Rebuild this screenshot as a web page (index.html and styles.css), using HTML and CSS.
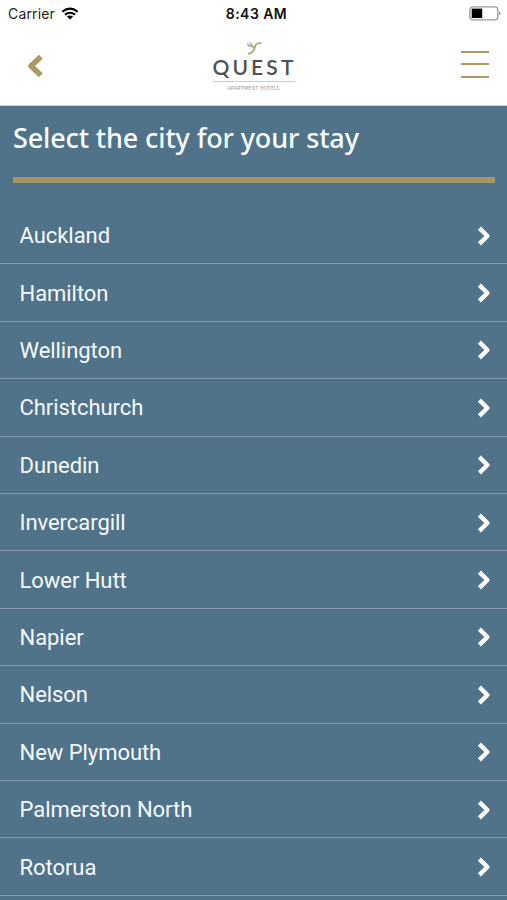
FILE: index.html
```html
<!DOCTYPE html>
<html lang="en">
<head>
<meta charset="utf-8">
<meta name="viewport" content="width=device-width, initial-scale=1">
<title>Quest Apartment Hotels</title>
<link rel="stylesheet" href="styles.css">
</head>
<body>
<svg class="defs" aria-hidden="true"><symbol id="chevron" viewBox="0 0 14 20"><path d="M2.4 2.2 10.4 10 2.4 17.8"/></symbol></svg>
<header class="header">
  <div class="status">
    <div class="carrier"><span>Carrier</span>
      <svg class="wifi" viewBox="0 0 18 13"><path d="M1.3 4.7Q9-1.5 16.7 4.7M4 7.7Q9 3.8 14 7.7"/><path class="wifi-dot" d="M5.9 9.6Q9 7.4 12.1 9.6L9 12.6Z"/></svg>
    </div>
    <time class="time">8:43 AM</time>
    <svg class="battery" viewBox="0 0 32 15"><rect class="battery-case" x=".8" y=".8" width="28" height="13" rx="3"/><rect x="2.7" y="2.6" width="10.5" height="9.4"/><path class="battery-cap" d="M30 5.2Q33 7.3 30 9.4Z"/></svg>
  </div>
  <nav class="nav">
    <button class="back" aria-label="Back"><svg viewBox="0 0 18 26"><path d="M14.8 3.8 5 13 14.8 22.2"/></svg></button>
    <div class="logo">
      <svg class="bird" viewBox="0 0 18 15"><path class="wing" d="M2.2 2.8 6.5 5M4.5 1.2 7.5 4.5M3 5 7 5.5"/><path class="body" d="M16 2.2C12.5 1.2 10.6 3.2 9.8 6.5C9 10 6.5 12 3.5 12.8M7 5.5Q8.5 6.8 9.8 5.8"/></svg>
      <div class="brand">QUEST</div>
      <div class="tagline">APARTMENT HOTELS</div>
    </div>
    <button class="menu" aria-label="Menu"><span></span><span></span><span></span></button>
  </nav>
</header>
<main>
  <h1 class="title">Select the city for your stay</h1>
  <ul class="cities">
    <li><span>Auckland</span><svg><use href="#chevron"/></svg></li>
    <li><span>Hamilton</span><svg><use href="#chevron"/></svg></li>
    <li><span>Wellington</span><svg><use href="#chevron"/></svg></li>
    <li><span>Christchurch</span><svg><use href="#chevron"/></svg></li>
    <li><span>Dunedin</span><svg><use href="#chevron"/></svg></li>
    <li><span>Invercargill</span><svg><use href="#chevron"/></svg></li>
    <li><span>Lower Hutt</span><svg><use href="#chevron"/></svg></li>
    <li><span>Napier</span><svg><use href="#chevron"/></svg></li>
    <li><span>Nelson</span><svg><use href="#chevron"/></svg></li>
    <li><span>New Plymouth</span><svg><use href="#chevron"/></svg></li>
    <li><span>Palmerston North</span><svg><use href="#chevron"/></svg></li>
    <li><span>Rotorua</span><svg><use href="#chevron"/></svg></li>
  </ul>
</main>
</body>
</html>
```
FILE: styles.css
```css
* { box-sizing: border-box; }
html, body { height: 100%; }
body {
  margin: 0;
  overflow: hidden;
  background: #507389;
  font-family: Roboto, "Liberation Sans", sans-serif;
}
.defs { display: none; }
.header { height: 106px; background: #fff; border-bottom: 1px solid #c9d2d9; }
.status {
  height: 27px;
  display: grid;
  grid-template-columns: 1fr auto 1fr;
  align-items: center;
  padding: 0 6px 0 8px;
  color: #222;
  font-family: Inter, sans-serif;
  font-size: 14px;
}
.carrier { display: flex; align-items: center; gap: 6px; letter-spacing: .15px; }
.wifi { width: 18px; height: 13px; }
.wifi path { fill: none; stroke: #000; stroke-width: 2.1; }
.wifi .wifi-dot { fill: #000; stroke: none; }
.time { padding-left: 4px; color: #111; font-weight: 600; font-size: 14px; letter-spacing: .45px; }
.battery { width: 32px; height: 15px; justify-self: end; }
.battery-case { fill: #fff; stroke: #999; stroke-width: 1.3; }
.battery-cap { fill: #999; }
.nav {
  height: 78px;
  display: grid;
  grid-template-columns: 1fr auto 1fr;
  align-items: start;
  padding: 0 17px 0 26px;
}
button { padding: 0; border: 0; background: none; }
.back { width: 18px; height: 26px; margin-top: 26px; }
.back svg { display: block; width: 18px; height: 26px; }
.back path { fill: none; stroke: #ad9962; stroke-width: 5.6; stroke-linecap: butt; stroke-linejoin: round; }
.logo { width: 82px; margin: 14px 0 0 -9px; display: flex; flex-direction: column; align-items: center; }
.bird { width: 18px; height: 15px; }
.bird path { fill: none; stroke-linecap: round; }
.bird .wing { stroke: #b5b8b8; stroke-width: 1.3; }
.bird .body { stroke: #a5ab5c; stroke-width: 1.6; }
.brand {
  width: 82px;
  height: 26px;
  border-bottom: 1px solid #dfc7a5;
  color: #505052;
  font: 600 21px/21px Lato, sans-serif;
  letter-spacing: 3.1px;
  white-space: nowrap;
}
.tagline { margin-top: 3px; color: #929292; font: 4.8px/7px Lato, sans-serif; letter-spacing: .3px; white-space: nowrap; }
.menu { justify-self: end; width: 28px; margin: 24px 1px 0 0; display: flex; flex-direction: column; gap: 10.3px; }
.menu span { height: 2px; background: #ad9962; }
.title {
  height: 77px;
  margin: 0 12px 0 13px;
  padding-top: 12px;
  border-bottom: 6px solid #a69663;
  color: #f8fcff;
  font: 500 27px/40px "Noto Sans", sans-serif;
  letter-spacing: -.13px;
  white-space: nowrap;
}
.cities { margin: 23.9px 0 0; padding: 0; list-style: none; }
.cities li {
  height: 57.42px;
  display: flex;
  align-items: center;
  justify-content: space-between;
  padding: 1px 16px 0 19.5px;
  border-bottom: 1px solid #819bad;
  color: #f5faff;
  font-size: 22px;
  letter-spacing: -.05px;
}
.cities svg { width: 14px; height: 20px; fill: none; stroke: #fff; stroke-width: 4.4; stroke-linejoin: round; }
```
